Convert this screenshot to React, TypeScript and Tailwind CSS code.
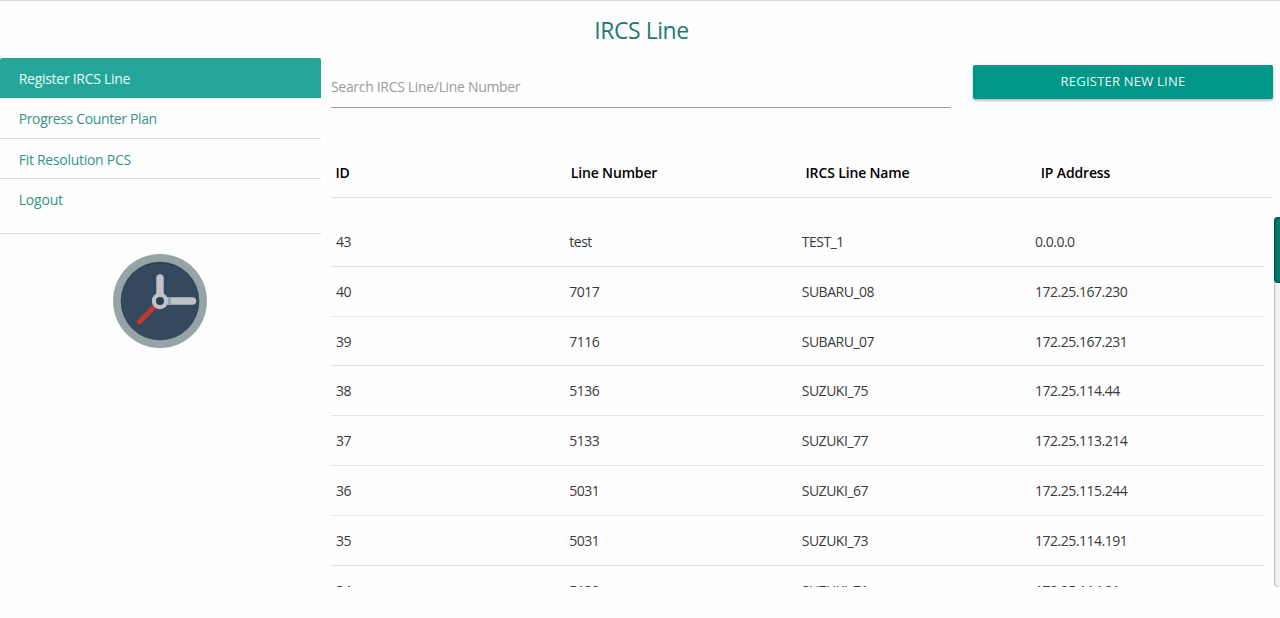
const menu = ['Register IRCS Line', 'Progress Counter Plan', 'Fit Resolution PCS', 'Logout'];
const menuStyle = [
  'h-10 rounded-t-[2px] bg-[#26a69a] text-[#eafaf9] pt-[11px] tracking-[-0.28px]',
  'h-[41px] border-b border-[#dcdcdc] text-[#369489] pt-[11px] tracking-[-0.36px]',
  'h-10 border-b border-[#dcdcdc] text-[#369489] pt-[11px] tracking-[-0.28px]',
  'h-[55px] border-b border-[#dcdcdc] text-[#369489] pt-[11px] tracking-[-0.2px]',
];

const rows = [
  ['43', 'test', 'TEST_1', '0.0.0.0'],
  ['40', '7017', 'SUBARU_08', '172.25.167.230'],
  ['39', '7116', 'SUBARU_07', '172.25.167.231'],
  ['38', '5136', 'SUZUKI_75', '172.25.114.44'],
  ['37', '5133', 'SUZUKI_77', '172.25.113.214'],
  ['36', '5031', 'SUZUKI_67', '172.25.115.244'],
  ['35', '5031', 'SUZUKI_73', '172.25.114.191'],
  ['34', '5132', 'SUZUKI_71', '172.25.114.21'],
];

function Clock() {
  return (
    <svg width="96" height="96" viewBox="0 0 96 96" className="block">
      <circle cx="48" cy="48" r="47" fill="#95a5a5" />
      <circle cx="48" cy="48" r="39.3" fill="#2f4154" />
      <circle cx="48" cy="48.8" r="38.5" fill="#34495e" />
      <path d="M47 49 27.5 69" stroke="#c0392b" strokeWidth="5" strokeLinecap="round" />
      <path d="M48 25V47M49 48H80.5" stroke="#bdc3c7" strokeWidth="7.4" strokeLinecap="round" />
      <path d="M57.5 44.3V51.7" stroke="#95a5a5" strokeWidth="3" />
      <circle cx="48" cy="48" r="8.2" fill="#bdc3c7" />
      <circle cx="48" cy="48" r="4" fill="#2c3e50" />
    </svg>
  );
}

export default function App() {
  return (
    <div className="flex h-[618px] w-full flex-col overflow-hidden border-t border-[#d8d8d8] bg-[#fefefe] font-['Open_Sans','Noto_Sans',sans-serif] text-[14px] leading-5">
      <h1 className="h-[57px] shrink-0 pt-[13px] pl-[3px] text-center text-[23px] leading-8 tracking-[-0.45px] text-[#1d7a72]">IRCS Line</h1>
      <div className="flex">
        <aside className="w-[321px] shrink-0">
          <nav>
            {menu.map((m, i) => (
              <a key={m} className={`block pl-[18.7px] ${menuStyle[i]}`}>{m}</a>
            ))}
          </nav>
          <div className="flex justify-center pt-[19px] pr-px"><Clock /></div>
        </aside>
        <main className="ml-[10px] min-w-0 flex-1">
          <div className="flex h-[92px] items-start">
            <div className="h-[50px] w-[620px] border-b border-[#9e9e9e] pt-[19px] tracking-[-0.32px] text-[#9b9b9b]">Search IRCS Line/Line Number</div>
            <button className="mt-[7px] ml-[22px] h-[34px] w-[300px] rounded-[2px] bg-[#009688] pb-[2px] text-[13px] font-medium tracking-[0.22px] text-[#eafaf8] shadow-[0_2px_2px_0_rgba(0,0,0,0.16),0_1px_4px_0_rgba(0,0,0,0.14)]">REGISTER NEW LINE</button>
          </div>
          <div className="grid h-12 w-[941px] grid-cols-4 border-b border-[#e0e0e0] pt-[13px] font-semibold tracking-[-0.15px] text-black">
            <span className="pl-[4.5px]">ID</span>
            <span className="pl-[4.5px]">Line Number</span>
            <span className="pl-[4px]">IRCS Line Name</span>
            <span className="pl-[4px]">IP Address</span>
          </div>
          <div className="mt-[19px] flex h-[370px] overflow-hidden">
            <div className="w-[933px] shrink-0">
              {rows.map((r) => (
                <div key={r[0]} className="grid h-[49.8px] grid-cols-4 border-b border-[#e3e3e3] pt-[15px] tracking-[-0.48px] text-[#3a3a3a]">
                  {r.map((c, i) => (
                    <span key={i} className={i > 1 ? 'pl-[4.2px]' : 'pl-[5px]'}>{c}</span>
                  ))}
                </div>
              ))}
            </div>
            <div className="ml-[10px] w-3 shrink-0 rounded-[4px] bg-[#f3f3f3] shadow-[inset_1px_0_2px_rgba(0,0,0,0.25)]">
              <div className="h-[66px] rounded-[4px] bg-[#00796b] shadow-[inset_0_0_3px_rgba(0,0,0,0.6)]" />
            </div>
          </div>
        </main>
      </div>
    </div>
  );
}
